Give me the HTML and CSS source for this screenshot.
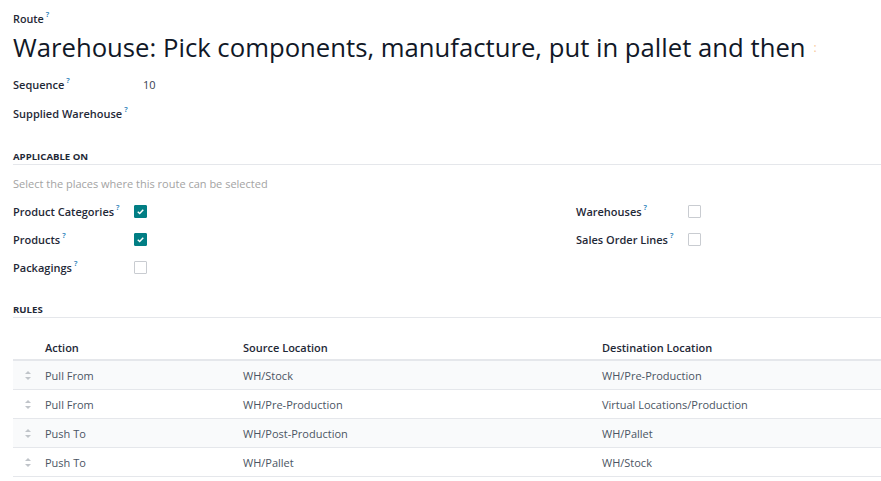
FILE: index.html
```html
<!DOCTYPE html>
<html>
<head>
<meta charset="utf-8">
<link rel="stylesheet" href="styles.css">
</head>
<body>
<div class="sheet">
  <div class="route-label">Route<sup class="q">?</sup></div>
  <div class="title-row"><h1 class="title">Warehouse: Pick components, manufacture, put in pallet and then</h1><span class="lang">:</span></div>

  <div class="fields">
    <div class="field"><span class="flabel">Sequence<sup class="q">?</sup></span><span class="fval">10</span></div>
    <div class="field"><span class="flabel">Supplied Warehouse<sup class="q">?</sup></span><span class="fval"></span></div>
  </div>

  <div class="sep">APPLICABLE ON</div>
  <div class="hint">Select the places where this route can be selected</div>

  <div class="applic">
    <div class="col left">
      <div class="crow"><span class="clabel">Product Categories<sup class="q">?</sup></span><span class="cb on"><svg viewBox="0 0 12 12"><path d="M3 6.3 L5.1 8.2 L9 4" fill="none" stroke="#fff" stroke-width="1.6"/></svg></span></div>
      <div class="crow"><span class="clabel">Products<sup class="q">?</sup></span><span class="cb on"><svg viewBox="0 0 12 12"><path d="M3 6.3 L5.1 8.2 L9 4" fill="none" stroke="#fff" stroke-width="1.6"/></svg></span></div>
      <div class="crow"><span class="clabel">Packagings<sup class="q">?</sup></span><span class="cb"></span></div>
    </div>
    <div class="col right">
      <div class="crow"><span class="clabel r">Warehouses<sup class="q">?</sup></span><span class="cb"></span></div>
      <div class="crow"><span class="clabel r">Sales Order Lines<sup class="q">?</sup></span><span class="cb"></span></div>
    </div>
  </div>

  <div class="sep rules">RULES</div>

  <table class="rules-table">
    <thead>
      <tr><th class="h"></th><th class="c1">Action</th><th class="c2">Source Location</th><th>Destination Location</th></tr>
    </thead>
    <tbody>
      <tr><td class="h"><span class="handle"></span></td><td>Pull From</td><td>WH/Stock</td><td>WH/Pre-Production</td></tr>
      <tr><td class="h"><span class="handle"></span></td><td>Pull From</td><td>WH/Pre-Production</td><td>Virtual Locations/Production</td></tr>
      <tr><td class="h"><span class="handle"></span></td><td>Push To</td><td>WH/Post-Production</td><td>WH/Pallet</td></tr>
      <tr><td class="h"><span class="handle"></span></td><td>Push To</td><td>WH/Pallet</td><td>WH/Stock</td></tr>
    </tbody>
  </table>
</div>
</body>
</html>
```
FILE: styles.css
```css
html, body {
  margin: 0;
  padding: 0;
  background: #fff;
}
body {
  font-family: "Open Sans", "Noto Sans", sans-serif;
  font-size: 11px;
  color: #374151;
}
.sheet {
  padding: 9px 0 0 13px;
}
.q {
  color: #1d7bb8;
  font-size: 7.5px;
  font-weight: 600;
  margin-left: 2px;
  vertical-align: 6px;
  line-height: 0;
}
.route-label {
  font-weight: 600;
  font-size: 10.8px;
  color: #1f2937;
  height: 20px;
  line-height: 20px;
}
.title-row {
  display: flex;
  align-items: center;
  height: 37px;
}
.title {
  margin: 0;
  font-weight: 400;
  font-size: 25.7px;
  color: #111827;
  line-height: 37px;
}
.lang {
  color: #f8c89a;
  font-size: 12px;
  margin-left: 8px;
}
.fields {
  margin-top: 4px;
}
.field {
  display: flex;
  align-items: center;
  height: 29px;
}
.flabel {
  width: 130px;
  font-weight: 600;
  color: #1f2937;
}
.fval {
  color: #374151;
}
.sep {
  margin-top: 22px;
  font-weight: 700;
  font-size: 9.6px;
  color: #1f2937;
  padding-bottom: 0;
  border-bottom: 1px solid #e5e7eb;
  line-height: 14px;
}
.hint {
  margin-top: 10px;
  color: #a3a3a3;
  line-height: 18px;
}
.applic {
  display: flex;
  margin-top: 4px;
}
.col.left {
  width: 563px;
  flex-shrink: 0;
}
.col.right {
  flex: 1;
}
.crow {
  display: flex;
  align-items: center;
  height: 28px;
}
.clabel {
  width: 121px;
  font-weight: 600;
  color: #1f2937;
}
.clabel.r {
  width: 112px;
}
.cb {
  width: 11px;
  height: 11px;
  border: 1px solid #c9ccd1;
  border-radius: 1px;
  background: #fff;
  display: inline-flex;
}
.cb.on {
  background: #017e84;
  border-color: #017e84;
}
.cb svg {
  width: 11px;
  height: 11px;
}
.sep.rules {
  margin-top: 22px;
}
.rules-table {
  width: 100%;
  border-collapse: collapse;
  margin-top: 17px;
}
.rules-table th {
  text-align: left;
  font-weight: 600;
  color: #1f2937;
  height: 24px;
  padding: 0;
  border-bottom: 2px solid #e5e7eb;
}
.rules-table td {
  height: 28px;
  padding: 0;
  color: #4b5563;
  border-bottom: 1px solid #e5e7eb;
}
.rules-table tbody tr:nth-child(odd) td {
  background: #f9fafb;
}
.rules-table .h {
  width: 32px;
}
.rules-table .c1 {
  width: 198px;
}
.rules-table .c2 {
  width: 359px;
}
.handle {
  display: block;
  position: relative;
  width: 7px;
  height: 9px;
  margin-left: 12px;
}
.handle::before, .handle::after {
  content: "";
  position: absolute;
  left: 0;
  border-left: 3.5px solid transparent;
  border-right: 3.5px solid transparent;
}
.handle::before {
  top: 0;
  border-bottom: 3.5px solid #c0c4c9;
}
.handle::after {
  bottom: 0;
  border-top: 3.5px solid #c0c4c9;
}
```
